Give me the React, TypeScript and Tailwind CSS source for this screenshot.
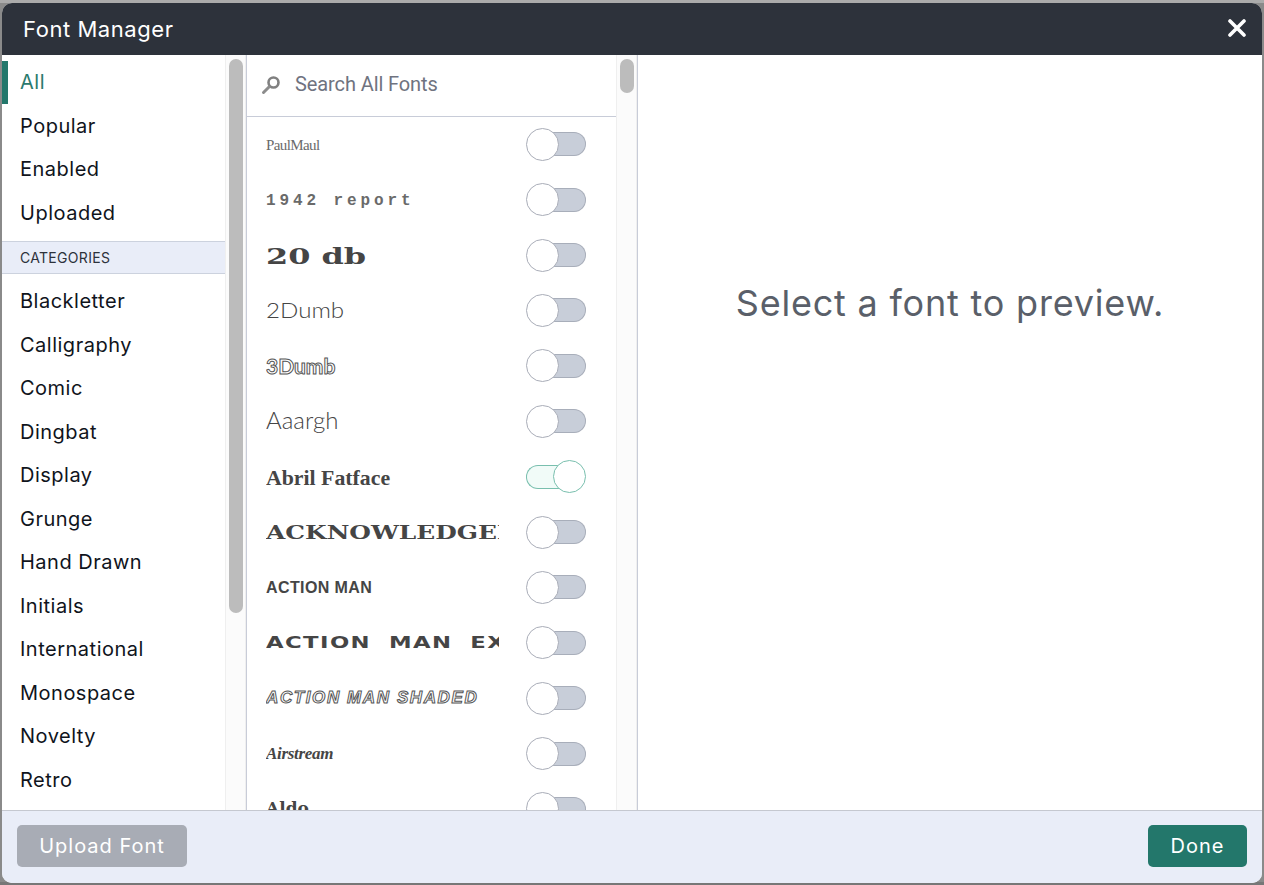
const uiFont = "font-['Inter','Noto_Sans',sans-serif]";

const mainItems = ["Popular", "Enabled", "Uploaded"];
const categories = [
  "Blackletter",
  "Calligraphy",
  "Comic",
  "Dingbat",
  "Display",
  "Grunge",
  "Hand Drawn",
  "Initials",
  "International",
  "Monospace",
  "Novelty",
  "Retro",
];

const fonts = [
  { name: "PaulMaul", cls: "font-['Liberation_Serif'] text-[15px] tracking-[-0.6px] opacity-80" },
  { name: "1942 report", cls: "font-['Liberation_Mono'] font-bold text-[16px] tracking-[3.9px] mt-[2px] opacity-80" },
  { name: "20 db", cls: "font-['DejaVu_Serif'] font-bold text-[22px] scale-x-[1.45] mt-[2px]" },
  { name: "2Dumb", cls: "font-['Lato'] font-light text-[21px] scale-x-[1.15] -mt-[2px]" },
  { name: "3Dumb", cls: "font-['Lato'] font-bold text-[21px] text-white [-webkit-text-stroke:1px_#555]" },
  { name: "Aaargh", cls: "font-['Lato'] font-light text-[24px] -mt-[2px]" },
  { name: "Abril Fatface", cls: "font-['Liberation_Serif'] font-bold text-[21.8px] mt-[3px]" },
  { name: "ACKNOWLEDGEMENT", cls: "font-['DejaVu_Serif'] font-bold text-[18px] scale-x-[1.38]" },
  { name: "ACTION MAN", cls: "font-['Liberation_Sans'] font-bold text-[16px] tracking-[0.4px]" },
  { name: "ACTION MAN EXTENDED", cls: "font-['DejaVu_Sans'] font-bold text-[16px] scale-x-[1.42] tracking-[1px] [word-spacing:6px]" },
  {
    name: "ACTION MAN SHADED",
    cls: "font-['Liberation_Sans'] font-bold italic text-[17px] tracking-[1.6px] text-white [-webkit-text-stroke:1px_#555]",
  },
  { name: "Airstream", cls: "font-['Liberation_Serif'] font-bold italic text-[17px] tracking-[-0.3px]" },
  { name: "Aldo", cls: "font-['DejaVu_Serif'] font-bold text-[17px]" },
];

const Toggle = ({ on }: { on: boolean }) => {
  if (on) {
    return (
      <div className="flex h-[33px] w-[60px] shrink-0 items-center justify-end">
        <div className="h-6 w-[44px] rounded-l-full border border-r-0 border-[#79bfae] bg-[#f1fbf8]" />
        <div className="-ml-[17px] relative h-[33px] w-[33px] rounded-full border border-[#79bfae] bg-white" />
      </div>
    );
  }
  return (
    <div className="flex h-[33px] w-[60px] shrink-0 items-center">
      <div className="relative z-10 h-[33px] w-[33px] shrink-0 rounded-full border border-[#a9adb8] bg-white" />
      <div className="-ml-[10px] h-6 w-[37px] rounded-r-full border border-l-0 border-[#a8aeba] bg-[#c8ced9]" />
    </div>
  );
};

const ScrollBar = ({ thumb }: { thumb: string }) => (
  <div className="w-[21px] shrink-0 border-x border-[#efefef] bg-[#fbfbfb] pl-[3px] pt-1">
    <div className={`w-[14px] rounded-full bg-[#bcbcbc] ${thumb}`} />
  </div>
);

export default function App() {
  return (
    <div className="flex h-screen w-full bg-[linear-gradient(180deg,#ababab_0px,#ababab_3px,#8a8a8a_3px,#8a8a8a_882px,#777777_882px)] px-[2px] pb-[2px] pt-[3px]">
      <div className={`flex w-full flex-col overflow-hidden rounded-[10px] bg-white ${uiFont}`}>
        {/* Header */}
        <div className="flex h-[52px] shrink-0 items-center justify-between bg-[#2d323b] pl-[21px] pr-[16px] text-white">
          <div className="text-[22px] tracking-[0.55px]">Font Manager</div>
          <svg width="18" height="18" viewBox="0 0 18 18" className="-mt-[2px]">
            <path d="M2 2 L16 16 M16 2 L2 16" stroke="#fff" strokeWidth="3.6" strokeLinecap="round" />
          </svg>
        </div>

        {/* Body */}
        <div className="flex min-h-0 flex-1 overflow-hidden">
          {/* Sidebar */}
          <div className="w-[223px] shrink-0 overflow-hidden pt-[5.5px] text-[20px] tracking-[0.5px] text-[#10141c]">
            <div className="flex h-[43.5px] items-center border-l-[6px] border-[#23776b] pl-3 text-[#2b7a6d]">All</div>
            {mainItems.map((item) => (
              <div key={item} className="flex h-[43.5px] items-center pl-[18px]">
                {item}
              </div>
            ))}
            <div className="mb-[5.5px] mt-[6.5px] flex h-[33px] items-center border-y border-[#ccd2de] bg-[#e9edf8] pl-[18px] text-[14px] tracking-[0.3px] text-[#2d323b]">
              CATEGORIES
            </div>
            {categories.map((item) => (
              <div key={item} className="flex h-[43.5px] items-center pl-[18px]">
                {item}
              </div>
            ))}
          </div>
          <ScrollBar thumb="h-[554px]" />

          {/* Font list */}
          <div className="w-[370px] shrink-0 overflow-hidden border-l border-[#c8ccd8]">
            <div className="flex h-[61.6px] items-center border-b border-[#c8ccd8] pl-[13px]">
              <svg width="22" height="22" viewBox="0 0 22 22" className="shrink-0">
                <circle cx="13.5" cy="8.5" r="5" fill="none" stroke="#808080" strokeWidth="2.6" />
                <path d="M9 13 L3.5 18.5" stroke="#8c8c8c" strokeWidth="3" strokeLinecap="round" />
              </svg>
              <input
                placeholder="Search All Fonts"
                className="ml-[13px] w-[300px] -translate-y-[1px] bg-transparent font-['Roboto',sans-serif] text-[20px] tracking-[-0.1px] outline-none placeholder:text-[#6f7380]"
              />
            </div>
            {fonts.map((font) => (
              <div key={font.name} className="flex h-[55.4px] items-center pl-[19px]">
                <div className="w-[233px] overflow-hidden whitespace-nowrap text-[#454545]">
                  <span className={`inline-block origin-left ${font.cls}`}>{font.name}</span>
                </div>
                <div className="ml-[27px]">
                  <Toggle on={font.name === "Abril Fatface"} />
                </div>
              </div>
            ))}
          </div>
          <ScrollBar thumb="h-[34px]" />

          {/* Preview */}
          <div className="flex min-w-0 flex-1 justify-center border-l border-[#c8ccd8] pt-[221px] text-[36px] leading-[54px] tracking-[0.8px] text-[#5a5f69]">
            Select a font to preview.
          </div>
        </div>

        {/* Footer */}
        <div className="flex h-[73px] shrink-0 items-start justify-between border-t border-[#c5c8d0] bg-[#e9edf8] px-[15px] pt-[14px] text-[20px] tracking-[1px] text-white">
          <button className="flex h-[42px] w-[170px] items-center justify-center rounded-[5px] bg-[#a8acb5]">Upload Font</button>
          <button className="flex h-[42px] w-[99px] items-center justify-center rounded-[5px] bg-[#23776b]">Done</button>
        </div>
      </div>
    </div>
  );
}
